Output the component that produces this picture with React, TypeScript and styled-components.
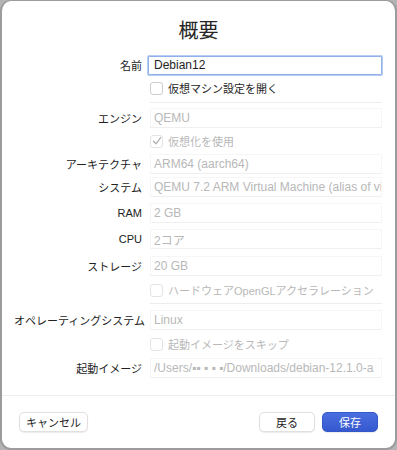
import styled, { createGlobalStyle } from "styled-components";

const Global = createGlobalStyle`
  html, body {
    margin: 0;
    padding: 0;
    background: #b4b4b4;
  }
  body {
    font-family: "Liberation Sans", "Noto Sans CJK JP", sans-serif;
    -webkit-font-smoothing: antialiased;
  }
`;

const Window = styled.div`
  box-sizing: border-box;
  width: 397px;
  height: 450px;
  background: #ffffff;
  border: 2px solid #9c9c9c;
  border-top-width: 1px;
  border-radius: 11px;
  display: flex;
  flex-direction: column;
  overflow: hidden;
`;

const Title = styled.h1`
  margin: 0;
  height: 50px;
  display: flex;
  align-items: center;
  justify-content: center;
  padding-top: 6px;
  box-sizing: border-box;
  font-size: 20px;
  font-weight: 400;
  color: #262626;
`;

const Form = styled.div`
  display: flex;
  flex-direction: column;
  padding: 3px 13px 0 12px;
  flex: 1;
`;

const Row = styled.div<{ $h: number }>`
  display: grid;
  grid-template-columns: 128px 1fr;
  column-gap: 6px;
  align-items: center;
  height: ${(p) => p.$h}px;
`;

const Label = styled.div`
  text-align: right;
  font-size: 11px;
  color: #222222;
  white-space: nowrap;
`;

const NameInput = styled.input`
  box-sizing: border-box;
  height: 19px;
  width: 100%;
  padding: 0 5px;
  font-family: inherit;
  font-size: 12px;
  color: #1e1e1e;
  border: 1px solid #8fb0ec;
  box-shadow: 0 0 0 1px #b9cdf3;
  border-radius: 1px;
  outline: none;
`;

const Field = styled.div`
  box-sizing: border-box;
  height: 20px;
  margin-left: 2px;
  padding: 0 3px;
  display: flex;
  align-items: center;
  font-size: 12px;
  color: #b8b8b8;
  white-space: nowrap;
  overflow: hidden;
  border: 1px solid #f6f6f6;
  border-bottom-color: #efefef;
`;

const Check = styled.label<{ $disabled?: boolean }>`
  display: flex;
  align-items: center;
  gap: 5px;
  margin-left: 2px;
  font-size: 11px;
  color: ${(p) => (p.$disabled ? "#b8b8b8" : "#262626")};
  white-space: nowrap;
`;

const Box = styled.span<{ $disabled?: boolean }>`
  box-sizing: border-box;
  width: 13px;
  height: 13px;
  border-radius: 3px;
  border: 1px solid ${(p) => (p.$disabled ? "#e4e4e4" : "#cdcdcd")};
  background: #fff;
  display: flex;
  align-items: center;
  justify-content: center;
`;

const Sep = styled.div<{ $full?: boolean }>`
  height: 1px;
  background: #ededed;
  margin: ${(p) => (p.$full ? "0" : "2px 0 4px 136px")};
`;

const Footer = styled.div`
  display: flex;
  align-items: center;
  padding: 0 17px 0 17px;
  height: 52px;
  gap: 7px;
`;

const Button = styled.button<{ $primary?: boolean }>`
  height: 20px;
  min-width: 56px;
  padding: 0 6px;
  font-family: inherit;
  font-size: 11px;
  border-radius: 5px;
  border: 1px solid ${(p) => (p.$primary ? "#3458c8" : "#e0e0e0")};
  background: ${(p) => (p.$primary ? "linear-gradient(#4a6fe0, #3558cf)" : "#ffffff")};
  color: ${(p) => (p.$primary ? "#ffffff" : "#222222")};
  box-shadow: 0 1px 1px rgba(0, 0, 0, 0.08);
`;

const Spacer = styled.div`
  flex: 1;
`;

function CheckMark() {
  return (
    <svg width="10" height="10" viewBox="0 0 10 10">
      <path d="M1.5 5.2 L4 7.8 L8.6 1.6" fill="none" stroke="#b5b5b5" strokeWidth="1.4" strokeLinecap="round" strokeLinejoin="round" />
    </svg>
  );
}

function CheckRow({ h, text, disabled, checked }: { h: number; text: string; disabled?: boolean; checked?: boolean }) {
  return (
    <Row $h={h}>
      <span />
      <Check $disabled={disabled}>
        <Box $disabled={disabled}>{checked && <CheckMark />}</Box>
        {text}
      </Check>
    </Row>
  );
}

function FieldRow({ h, label, value }: { h: number; label: string; value: string }) {
  return (
    <Row $h={h}>
      <Label>{label}</Label>
      <Field>{value}</Field>
    </Row>
  );
}

export default function App() {
  return (
    <>
      <Global />
      <Window>
        <Title>概要</Title>
        <Form>
          <Row $h={22}>
            <Label>名前</Label>
            <NameInput defaultValue="Debian12" />
          </Row>
          <CheckRow h={24} text="仮想マシン設定を開く" />
          <Sep />
          <FieldRow h={22} label="エンジン" value="QEMU" />
          <CheckRow h={24} text="仮想化を使用" disabled checked />
          <FieldRow h={22} label="アーキテクチャ" value="ARM64 (aarch64)" />
          <FieldRow h={24} label="システム" value="QEMU 7.2 ARM Virtual Machine (alias of vir" />
          <FieldRow h={27} label="RAM" value="2 GB" />
          <FieldRow h={26} label="CPU" value="2コア" />
          <FieldRow h={27} label="ストレージ" value="20 GB" />
          <CheckRow h={22} text="ハードウェアOpenGLアクセラレーション" disabled />
          <Sep />
          <FieldRow h={24} label="オペレーティングシステム" value="Linux" />
          <CheckRow h={24} text="起動イメージをスキップ" disabled />
          <FieldRow h={24} label="起動イメージ" value="/Users/▪▪ ▪ ▪ ▪/Downloads/debian-12.1.0-a" />
        </Form>
        <Sep $full />
        <Footer>
          <Button>キャンセル</Button>
          <Spacer />
          <Button>戻る</Button>
          <Button $primary>保存</Button>
        </Footer>
      </Window>
    </>
  );
}
